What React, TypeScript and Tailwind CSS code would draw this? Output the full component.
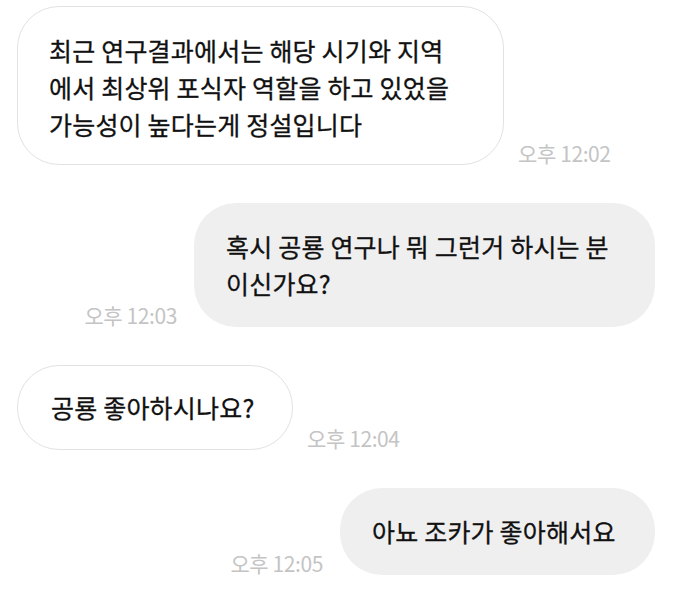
import React from 'react';

const font = { fontFamily: '"Noto Sans CJK KR", "Noto Sans", sans-serif' };

function Time({ children }: { children: React.ReactNode }) {
  return (
    <span className="text-[21px] leading-[24px] text-[#c4c4c4] whitespace-nowrap tracking-[-0.4px]">
      {children}
    </span>
  );
}

function Incoming({ lines, time, className }: { lines: string[]; time: string; className: string }) {
  return (
    <div className="flex items-end gap-[14px]">
      <div
        className={`rounded-[42px] border-[1.5px] border-[#e2e2e2] bg-white text-[25px] leading-[37px] tracking-[0.2px] text-[#111111] [-webkit-text-stroke:0.3px_#111111] ${className}`}
      >
        {lines.map((l, i) => (
          <div key={i} className="whitespace-nowrap">{l}</div>
        ))}
      </div>
      <Time>{time}</Time>
    </div>
  );
}

function Outgoing({ lines, time, className }: { lines: string[]; time: string; className: string }) {
  return (
    <div className="flex items-end justify-end gap-[17px]">
      <Time>{time}</Time>
      <div className={`rounded-[42px] bg-[#efefef] text-[25px] leading-[37px] tracking-[0.2px] text-[#111111] [-webkit-text-stroke:0.3px_#111111] ${className}`}>
        {lines.map((l, i) => (
          <div key={i} className="whitespace-nowrap">{l}</div>
        ))}
      </div>
    </div>
  );
}

export default function App() {
  return (
    <div className="w-[683px] h-[590px] bg-white overflow-hidden pt-[6px] pl-[17px] pr-[28px] flex flex-col gap-[38px]" style={font}>
      <Incoming
        className="w-[487px] pl-[31px] pr-4 pt-[25px] pb-[21px]"
        lines={['최근 연구결과에서는 해당 시기와 지역', '에서 최상위 포식자 역할을 하고 있었을', '가능성이 높다는게 정설입니다']}
        time="오후 12:02"
      />
      <Outgoing
        className="w-[461px] pl-[32px] pr-4 py-[25px]"
        lines={['혹시 공룡 연구나 뭐 그런거 하시는 분', '이신가요?']}
        time="오후 12:03"
      />
      <Incoming
        className="w-[276px] pl-[33px] pr-4 py-[23px]"
        lines={['공룡 좋아하시나요?']}
        time="오후 12:04"
      />
      <Outgoing
        className="w-[315px] pl-[32px] pr-4 py-[25px]"
        lines={['아뇨 조카가 좋아해서요']}
        time="오후 12:05"
      />
    </div>
  );
}
